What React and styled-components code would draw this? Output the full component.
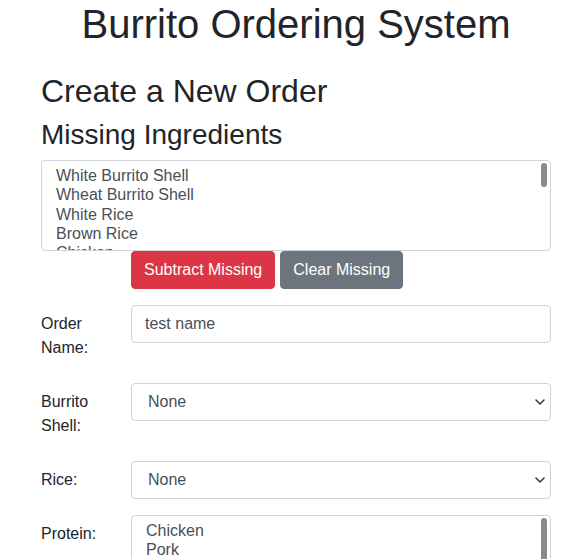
import styled, { createGlobalStyle } from 'styled-components';

const GlobalStyle = createGlobalStyle`
  body {
    margin: 0;
    background: #ffffff;
    font-family: "Liberation Sans", Arial, sans-serif;
    font-size: 16px;
    line-height: 1.5;
    color: #212529;
  }
`;

const Container = styled.div`
  width: 510px;
  margin-left: 41px;
`;

const Title = styled.h1`
  margin: 0 0 24px;
  font-size: 40px;
  font-weight: 500;
  line-height: 1.2;
  text-align: center;
`;

const Heading = styled.h2`
  margin: 0 0 ${p => p.$gap || 8}px;
  font-size: ${p => p.$size}px;
  font-weight: 500;
  line-height: 1.2;
`;

const ListBox = styled.div`
  position: relative;
  box-sizing: border-box;
  height: 91px;
  padding: 5px 12px 0;
  border: 1px solid #ced4da;
  border-radius: 4px;
  overflow: hidden;
  color: #495057;
`;

const Option = styled.div`
  padding: 0 2px;
  height: 19.3px;
  line-height: 19.3px;
  white-space: nowrap;
`;

const Thumb = styled.div`
  position: absolute;
  top: 2px;
  right: 3px;
  width: 6px;
  height: ${p => p.$h}px;
  border-radius: 3px;
  background: #8a8a8a;
`;

const FormRow = styled.div`
  display: grid;
  grid-template-columns: 60px 420px;
  column-gap: 30px;
  margin-bottom: 16px;
`;

const Label = styled.label`
  padding: 7px 0;
  line-height: 24px;
`;

const Buttons = styled.div`
  grid-column: 2;
  display: flex;
  gap: 5px;
`;

const Button = styled.button`
  height: 38px;
  padding: 0 12px;
  border: 1px solid ${p => p.$bg};
  border-radius: 4px;
  background: ${p => p.$bg};
  color: #ffffff;
  font-family: inherit;
  font-size: 16px;
`;

const Input = styled.div`
  box-sizing: border-box;
  height: 38px;
  padding: 0 12px 0 ${p => p.$indent || 13}px;
  border: 1px solid #ced4da;
  border-radius: 4px;
  display: flex;
  align-items: center;
  justify-content: space-between;
  color: #495057;
  line-height: 24px;
`;

const Chevron = () => (
  <svg width="10" height="6" viewBox="0 0 10 6" style={{ marginRight: -7 }}>
    <path d="M1 1l4 4 4-4" fill="none" stroke="#3a3a3a" strokeWidth="1.6" strokeLinecap="round" strokeLinejoin="round" />
  </svg>
);

const missing = ['White Burrito Shell', 'Wheat Burrito Shell', 'White Rice', 'Brown Rice', 'Chicken', 'Pork'];
const proteins = ['Chicken', 'Pork', 'Steak', 'Tofu'];

export default function App() {
  return (
    <>
      <GlobalStyle />
      <Container>
        <Title>Burrito Ordering System</Title>
        <Heading $size={32}>Create a New Order</Heading>
        <Heading as="h3" $size={28}>Missing Ingredients</Heading>
        <ListBox>
          {missing.map(m => <Option key={m}>{m}</Option>)}
          <Thumb $h={24} />
        </ListBox>
        <FormRow>
          <Buttons>
            <Button $bg="#dc3545">Subtract Missing</Button>
            <Button $bg="#6c757d">Clear Missing</Button>
          </Buttons>
        </FormRow>
        <FormRow>
          <Label>Order Name:</Label>
          <Input>test name</Input>
        </FormRow>
        <FormRow>
          <Label>Burrito Shell:</Label>
          <Input $indent={16}>None<Chevron /></Input>
        </FormRow>
        <FormRow>
          <Label>Rice:</Label>
          <Input $indent={16}>None<Chevron /></Input>
        </FormRow>
        <FormRow>
          <Label>Protein:</Label>
          <ListBox>
            {proteins.map(p => <Option key={p}>{p}</Option>)}
            <Thumb $h={60} />
          </ListBox>
        </FormRow>
      </Container>
    </>
  );
}
